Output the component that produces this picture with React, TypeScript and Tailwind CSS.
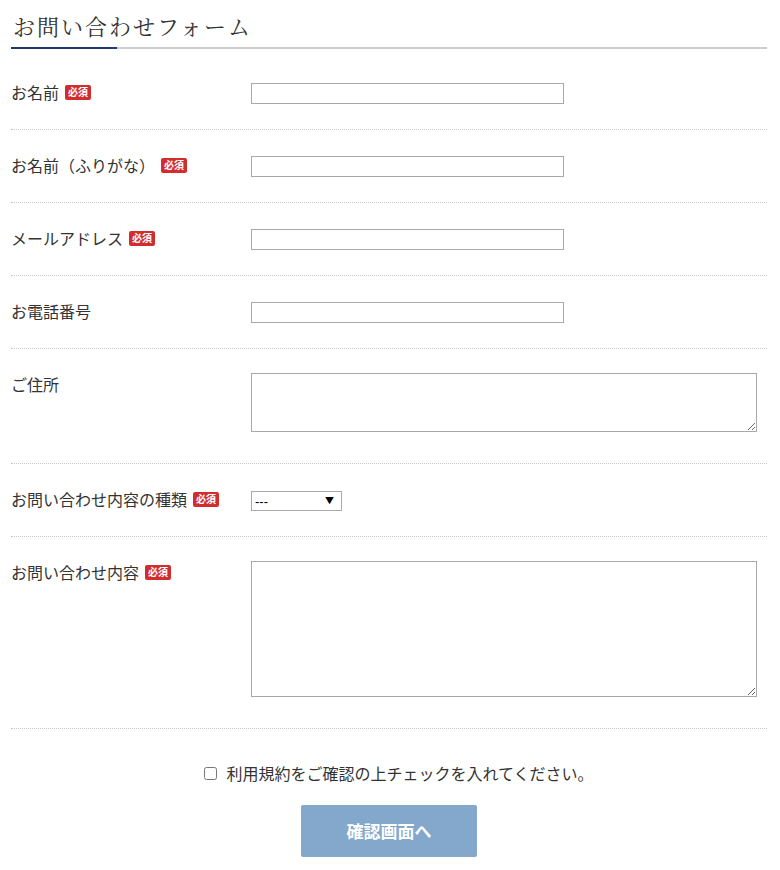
import React from 'react';

const sans = 'font-["Meiryo","Noto_Sans_CJK_JP","Noto_Sans",sans-serif]';

const Badge = () => {
  return (
    <span className="ml-[6px] inline-flex h-[15px] items-center rounded-[2px] bg-[#d22d2d] px-[3px] text-[10px] leading-none font-bold text-white">
      必須
    </span>
  );
};

const Row = (props: any) => {
  return (
    <div className={`flex border-b border-dotted border-[#c8c8c8] pt-[24px] ${props.pb}`}>
      <div className="flex w-[240px] shrink-0 items-center self-start text-[16px] leading-[22px] text-[#333]">
        <span>{props.label}</span>
        {props.required && <Badge />}
      </div>
      <div className="flex-1">{props.children}</div>
    </div>
  );
};

const TextInput = () => {
  return <input type="text" className="mt-[2px] block h-[21px] w-[313px] border border-[#a9a9a9] bg-white outline-none" />;
};

const App = () => {
  return (
    <div className={`w-[780px] bg-white pb-[13px] pl-[11px] pr-[13px] ${sans}`}>
      <h2 className="pt-[12px] pl-[2px] text-[22px] leading-[32px] tracking-[2px] text-[#333] font-['Liberation_Serif','Noto_Serif_CJK_JP','Noto_Sans_CJK_JP',serif] font-normal">
        お問い合わせフォーム
      </h2>
      <div className="mt-[3px] flex h-[2px]">
        <div className="w-[106px] bg-[#1e3a6e]" />
        <div className="flex-1 bg-[#cccccc]" />
      </div>

      <div className="mt-[8px]">
        <Row label="お名前" required pb="pb-[25px]">
          <TextInput />
        </Row>
        <Row label="お名前（ふりがな）" required pb="pb-[25px]">
          <TextInput />
        </Row>
        <Row label="メールアドレス" required pb="pb-[25px]">
          <TextInput />
        </Row>
        <Row label="お電話番号" pb="pb-[25px]">
          <TextInput />
        </Row>
        <Row label="ご住所" pb="pb-[31px]">
          <textarea className="block h-[59px] w-[506px] resize border border-[#a9a9a9] bg-white outline-none" />
        </Row>
        <Row label="お問い合わせ内容の種類" required pb="pb-[25px]">
          <div className="relative mt-[3px] h-[20px] w-[91px]">
            <select className="block h-[20px] w-[91px] appearance-none border border-[#a9a9a9] bg-white pl-[3px] text-[13px] leading-none text-black font-['Liberation_Sans',sans-serif] outline-none">
              <option>---</option>
            </select>
            <span className="pointer-events-none absolute right-[8px] top-[3px] text-[9px] leading-[14px] text-black">▼</span>
          </div>
        </Row>
        <Row label="お問い合わせ内容" required pb="pb-[31px]">
          <textarea className="block h-[136px] w-[506px] resize border border-[#a9a9a9] bg-white outline-none" />
        </Row>
      </div>

      <div className="mt-[33px] flex items-center justify-center pl-[20px] text-[16px] leading-[22px] text-[#333]">
        <input type="checkbox" className="h-[13px] w-[13px]" />
        <span className="ml-[9px]">利用規約をご確認の上チェックを入れてください。</span>
      </div>

      <div className="mt-[21px] flex justify-center">
        <button className="h-[52px] w-[176px] rounded-[2px] bg-[#84a8cc] text-[17px] font-bold text-white">
          確認画面へ
        </button>
      </div>
    </div>
  );
};

export default App;
